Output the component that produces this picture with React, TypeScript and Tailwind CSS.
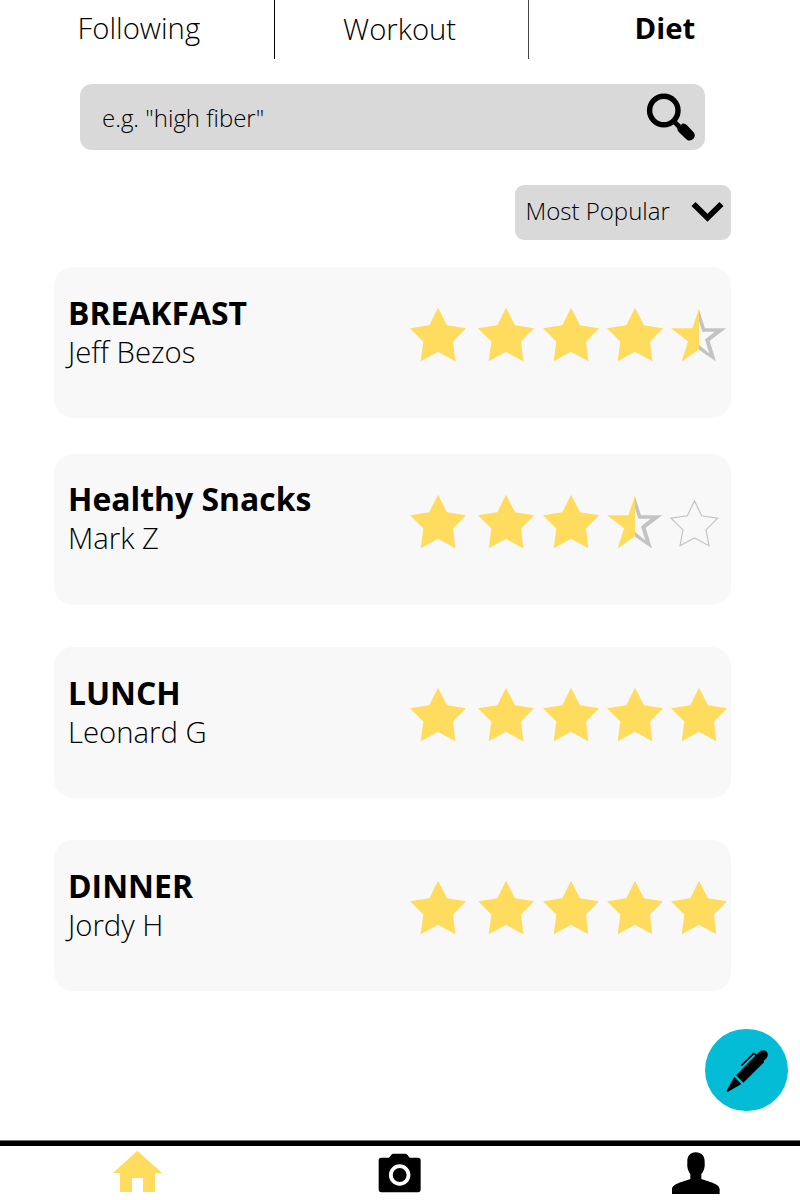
type StarKind = "full" | "half" | "empty";

interface Plan {
  title: string;
  author: string;
  stars: StarKind[];
  gap: string;
  textTop: string;
}

const plans: Plan[] = [
  { title: "BREAKFAST", author: "Jeff Bezos", stars: ["full", "full", "full", "full", "half"], gap: "mt-[27px]", textTop: "pt-[26px]" },
  { title: "Healthy Snacks", author: "Mark Z", stars: ["full", "full", "full", "half", "empty"], gap: "mt-[36px]", textTop: "pt-[25px]" },
  { title: "LUNCH", author: "Leonard G", stars: ["full", "full", "full", "full", "full"], gap: "mt-[42px]", textTop: "pt-[26px]" },
  { title: "DINNER", author: "Jordy H", stars: ["full", "full", "full", "full", "full"], gap: "mt-[42px]", textTop: "pt-[26px]" },
];

const starColumns = ["w-[68px]", "w-[65px]", "w-[64px]", "w-[64px]", "w-[57px]"];

function Star({ kind }: { kind: StarKind }) {
  return (
    <svg className="h-[54px] w-[57px] overflow-visible" viewBox="30 53.5 171 162">
      {kind === "full" && (
        <path fill="#ffdb5e" d="M114 53 141 105 198 114 159 154 166 213 114 185 62 213 70 154 30 114 88 105Z" />
      )}
      {kind === "half" && (
        <>
          <path
            fill="#c3c3c3"
            fillRule="evenodd"
            d="M113 56 132 114 196 114 146 152 165 214 113 178ZM113 90 124 125 161 125 132 148 145 190 113 163Z"
          />
          <path fill="#ffdb5e" d="M114 56V177L62 214 81 153 30 114H94Z" />
        </>
      )}
      {kind === "empty" && (
        <path
          fill="none"
          stroke="#c3c3c3"
          strokeWidth="3.5"
          d="M100.500 71 122 116 170 123 135 158 144 205.500 100.500 182.500 57 205.500 66 158 30 123 79 116Z"
        />
      )}
    </svg>
  );
}

function PlanCard({ plan }: { plan: Plan }) {
  return (
    <article className={`ml-[54px] flex h-[151px] w-[677px] shrink-0 rounded-[19px] bg-[#f8f8f8] ${plan.gap}`}>
      <div className={`w-[356px] pl-[14px] whitespace-nowrap ${plan.textTop}`}>
        <h2 className="text-[31.9px] leading-[40px] font-bold">{plan.title}</h2>
        <p className="text-[29.3px] leading-[38px] font-light">{plan.author}</p>
      </div>
      <div className="flex pt-[41px]">
        {plan.stars.map((kind, i) => (
          <div key={i} className={starColumns[i]}>
            <Star kind={kind} />
          </div>
        ))}
      </div>
    </article>
  );
}

export default function App() {
  return (
    <div className="relative flex h-[1200px] w-[800px] flex-col overflow-hidden bg-white font-['Open_Sans',sans-serif] text-black">
      <nav className="flex h-[59px] shrink-0 text-[29.3px] leading-[40px] font-light whitespace-nowrap">
        <div className="w-[275px] border-r border-black pt-[8px] pl-[77.500px]">Following</div>
        <div className="w-[254px] border-r border-[#444] pt-[9px] pl-[68px]">Workout</div>
        <div className="pt-[8px] pl-[105.500px] font-bold">Diet</div>
      </nav>

      <div className="mt-[25px] ml-[80px] flex h-[66.400px] w-[625.400px] shrink-0 items-center justify-between rounded-[12px] bg-[#d9d9d9] pr-[10px] pl-[22px]">
        <span className="pt-[2px] text-[24px] leading-[32px] font-light">e.g. "high fiber"</span>
        <svg className="h-[50px] w-[50px]" viewBox="-0.8 -0.2 50 50">
          <circle cx="18" cy="18.300" r="14.200" fill="none" stroke="#000" strokeWidth="5.400" />
          <path d="m27.500 28.500 6 6" stroke="#000" strokeWidth="4.800" />
          <path d="m31.500 36 5.200-4.700q2.500-.4 4.500 1.800l6.600 7q2.400 3.200 0 6.300-3.200 3.500-7 .8l-7.600-7.200q-1.800-2-1.700-4Z" />
        </svg>
      </div>

      <div className="mt-[34.300px] ml-[515px] flex h-[55.300px] w-[216.400px] shrink-0 items-center justify-between rounded-[9px] bg-[#d9d9d9] pr-[8px] pl-[10.500px]">
        <span className="pb-[2px] text-[24px] leading-[32px] font-light">Most Popular</span>
        <svg className="h-[20px] w-[32px] overflow-visible" viewBox="-0.5 0 32 20">
          <path d="m2 2 14 13.800L30 2" fill="none" stroke="#000" strokeWidth="5.800" />
        </svg>
      </div>

      <main className="flex min-h-0 flex-1 flex-col">
        {plans.map((plan) => (
          <PlanCard key={plan.title} plan={plan} />
        ))}
      </main>

      <button className="absolute top-[1028.500px] left-[705.300px] flex h-[82.400px] w-[82.400px] items-center justify-center rounded-full bg-[#04bcd6]">
        <svg className="h-[83px] w-[83px] shrink-0" viewBox="45 40 249 249">
          <path d="M138 182 205 114Q212 107 220 107C231 107 238 119 230 130L221 139 222 143 160 204Z" />
          <path d="M133 186 154 208 113 232Q109 233 111 226Z" />
          <path d="M154 153 191 116 199 122" fill="none" stroke="#000" strokeWidth="5" />
        </svg>
      </button>

      <footer className="flex h-[60px] shrink-0 flex-col">
        <div className="h-[6px] shrink-0 border-t border-[#777] bg-black" />
        <div className="flex">
          <svg className="mt-[4px] ml-[113px] h-[43px] w-[49px]" viewBox="69 60 147 129">
            <path fill="#ffdb5e" d="M142 62 216 129H195V186H159V144H126V186H90V129H69Z" />
          </svg>
          <svg className="mt-[7px] ml-[216px] h-[41px] w-[43px]" viewBox="54 70 129 123">
            <path d="M64 84H87Q91 80 94 75 96 72 100 72H136Q140 72 142 75 145 80 149 84H174Q182 84 182 92V179Q182 188 174 188H64Q56 188 56 179V92Q56 84 64 84Z" />
            <circle cx="119" cy="136" r="26.500" fill="none" stroke="#fff" strokeWidth="11.500" />
          </svg>
          <svg className="mt-[6px] ml-[251px] h-[43px] w-[48px]" viewBox="51 66 144 129">
            <path d="M122 67C139 67 150 79 149 96Q151 119 139 132V147C156 154 194 160 194 178V192H51V178C51 160 90 154 106 147V132Q95 119 97 96C96 79 106 67 122 67Z" />
          </svg>
        </div>
      </footer>
    </div>
  );
}
